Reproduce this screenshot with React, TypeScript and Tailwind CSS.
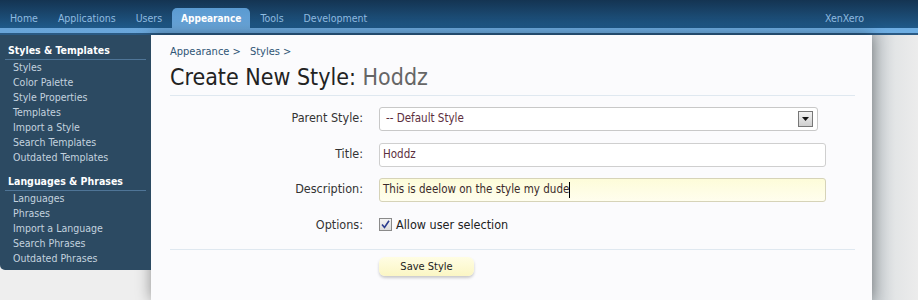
const font = "font-['Tahoma','DejaVu_Sans_Condensed','DejaVu_Sans',sans-serif] [font-stretch:condensed]";

const tabs = ["Home", "Applications", "Users", "Appearance", "Tools", "Development"];

const sections = [
  {
    title: "Styles & Templates",
    links: ["Styles", "Color Palette", "Style Properties", "Templates", "Import a Style", "Search Templates", "Outdated Templates"],
  },
  {
    title: "Languages & Phrases",
    links: ["Languages", "Phrases", "Import a Language", "Search Phrases", "Outdated Phrases"],
  },
];

const Row = ({ label, children, className = "" }: { label: string; children: React.ReactNode; className?: string }) => (
  <div className={`flex items-center ${className}`}>
    <div className="w-[194px] pr-px text-right text-[12.5px] text-[#333]">{label}</div>
    <div className="ml-[15px] flex-1">{children}</div>
  </div>
);

export default function App() {
  return (
    <div className={`w-[918px] h-[300px] overflow-hidden bg-[#eeeeee] ${font}`}>
      <div className="h-[28px] bg-gradient-to-b from-[#143452] to-[#1f5a8a] flex items-end justify-between">
        <div className="flex items-end">
          {tabs.map((t) =>
            t === "Appearance" ? (
              <div key={t} className="h-[20px] px-[9px] rounded-t-[5px] bg-gradient-to-b from-[#5a9ad1] to-[#69a5d9] text-white font-bold text-[10px] leading-[21px]">
                {t}
              </div>
            ) : (
              <div key={t} className="h-[20px] px-[10px] text-[#8fbbe0] text-[10.5px] leading-[20px]">
                {t}
              </div>
            )
          )}
        </div>
        <div className="pr-[54px] h-[20px] text-[#8fbbe0] text-[10.5px] leading-[20px]">XenXero</div>
      </div>
      <div className="h-[5px] bg-gradient-to-r from-[#69a5d9] to-[#6eaee3]" />
      <div className="h-[2px] bg-[#2a5a84]" />

      <div className="flex h-[265px]">
        <div className="relative z-10 w-[151px] self-start bg-[#2c4a62] rounded-bl-[5px] pt-[8px] pb-[4px] flex flex-col gap-[9px]">
          {sections.map((s) => (
            <div key={s.title}>
              <div className="mx-[5px] pl-[3px] pb-[2px] border-b border-[#4f7597] text-white font-bold text-[10.5px] leading-[14px]">{s.title}</div>
              <div>
                {s.links.map((l) => (
                  <div key={l} className="pl-[13px] text-[#c3d2df] text-[10.5px] leading-[15px]">
                    {l}
                  </div>
                ))}
              </div>
            </div>
          ))}
        </div>

        <div className="relative w-[721px] bg-[#fbfbfd] shadow-[0_0_14px_rgba(0,0,0,0.4)] pl-[19px] pr-[17px]">
          <div className="pt-[9px] text-[11px] text-[#2f5575] flex gap-[9px]">
            <span>Appearance &gt;</span>
            <span>Styles &gt;</span>
          </div>
          <div className="mt-[2px] text-[23px] leading-[28px] text-[#222]">
            Create New Style: <span className="text-[#666]">Hoddz</span>
          </div>
          <div className="mt-[4px] border-t border-[#dfe8f0]" />

          <div className="pt-[11px]">
            <Row label="Parent Style:">
              <div className="w-[439px] h-[24px] rounded-[3px] border border-[#c8c8c8] bg-white flex items-center justify-between pl-[6px] pr-[4px]">
                <span className="text-[11.5px] text-[#5c2e3e]">-- Default Style</span>
                <span className="w-[15px] h-[16px] border border-[#777] bg-gradient-to-b from-[#f2f2f2] to-[#cfcfcf] flex items-center justify-center">
                  <svg width="7" height="4" viewBox="0 0 7 4">
                    <path d="M0 0h7L3.5 4z" fill="#111" />
                  </svg>
                </span>
              </div>
            </Row>
            <Row label="Title:" className="mt-[12px]">
              <div className="w-[447px] h-[24px] rounded-[3px] border border-[#cfcfcf] bg-white flex items-center pl-[3px]">
                <span className="text-[11.5px] text-[#5c2e3e]">Hoddz</span>
              </div>
            </Row>
            <Row label="Description:" className="mt-[11px]">
              <div className="w-[447px] h-[24px] rounded-[3px] border border-[#d6d3b8] bg-gradient-to-b from-[#fdfcd9] to-[#fffeee] flex items-center pl-[3px]">
                <span className="text-[11.5px] text-[#3a2a2a]">This is deelow on the style my dude</span>
                <span className="w-px h-[16px] bg-black" />
              </div>
            </Row>
            <Row label="Options:" className="mt-[14px]">
              <div className="flex items-center gap-[4px]">
                <span className="w-[13px] h-[13px] border border-[#8a8a8a] bg-gradient-to-b from-[#f4f4f4] to-[#dcdcdc] flex items-center justify-center">
                  <svg width="9" height="9" viewBox="0 0 9 9">
                    <path d="M1 4.5l2.5 3L8 0.8" stroke="#2b3c8f" strokeWidth="1.6" fill="none" />
                  </svg>
                </span>
                <span className="text-[12.5px] text-[#222]">Allow user selection</span>
              </div>
            </Row>
          </div>

          <div className="mt-[15px] border-t border-[#dfe8f0]" />
          <div className="pl-[209px] pt-[7px]">
            <div className="w-[95px] h-[19px] rounded-[6px] bg-gradient-to-b from-[#fffde4] to-[#fbf6c4] shadow-[0_2px_3px_rgba(0,0,0,0.2)] text-center text-[11px] leading-[19px] text-[#222]">
              Save Style
            </div>
          </div>
        </div>

        <div className="flex-1 bg-gradient-to-r from-[#c3c9cd] via-[#e3e5e6] to-[#ececec]" />
      </div>
    </div>
  );
}
